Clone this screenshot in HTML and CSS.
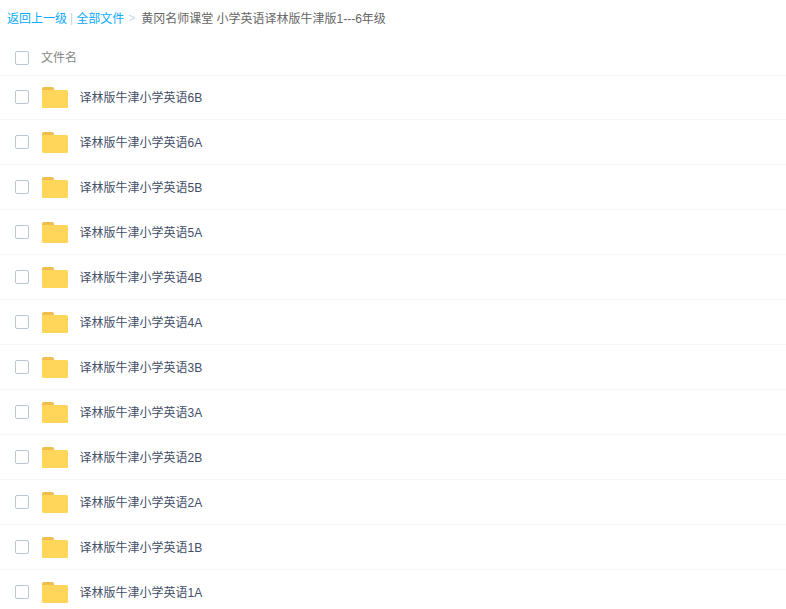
FILE: index.html
```html
<!DOCTYPE html>
<html lang="zh-CN">
<head>
<meta charset="utf-8">
<title>文件列表</title>
<link rel="stylesheet" href="styles.css">
</head>
<body>
<div class="crumbs"><a class="link">返回上一级</a><span class="bar">|</span><a class="link">全部文件</a><span class="sep">&gt;</span><span class="current">黄冈名师课堂 小学英语译林版牛津版1---6年级</span></div>
<div class="head"><span class="check"></span><span class="head-label">文件名</span></div>
<ul class="list">
<li class="row"><span class="check"></span><svg class="folder" viewBox="0 0 26 21"><path fill="#f0bd4e" d="M0 2a2 2 0 0 1 2-2h8a2 2 0 0 1 2 2v1H0z"/><path fill="#ffd659" d="M0 3h24.500A1.500 1.500 0 0 1 26 4.500V19.500A1.500 1.500 0 0 1 24.500 21H1.500A1.500 1.500 0 0 1 0 19.500z"/></svg><span class="name">译林版牛津小学英语6B</span></li>
<li class="row"><span class="check"></span><svg class="folder" viewBox="0 0 26 21"><path fill="#f0bd4e" d="M0 2a2 2 0 0 1 2-2h8a2 2 0 0 1 2 2v1H0z"/><path fill="#ffd659" d="M0 3h24.500A1.500 1.500 0 0 1 26 4.500V19.500A1.500 1.500 0 0 1 24.500 21H1.500A1.500 1.500 0 0 1 0 19.500z"/></svg><span class="name">译林版牛津小学英语6A</span></li>
<li class="row"><span class="check"></span><svg class="folder" viewBox="0 0 26 21"><path fill="#f0bd4e" d="M0 2a2 2 0 0 1 2-2h8a2 2 0 0 1 2 2v1H0z"/><path fill="#ffd659" d="M0 3h24.500A1.500 1.500 0 0 1 26 4.500V19.500A1.500 1.500 0 0 1 24.500 21H1.500A1.500 1.500 0 0 1 0 19.500z"/></svg><span class="name">译林版牛津小学英语5B</span></li>
<li class="row"><span class="check"></span><svg class="folder" viewBox="0 0 26 21"><path fill="#f0bd4e" d="M0 2a2 2 0 0 1 2-2h8a2 2 0 0 1 2 2v1H0z"/><path fill="#ffd659" d="M0 3h24.500A1.500 1.500 0 0 1 26 4.500V19.500A1.500 1.500 0 0 1 24.500 21H1.500A1.500 1.500 0 0 1 0 19.500z"/></svg><span class="name">译林版牛津小学英语5A</span></li>
<li class="row"><span class="check"></span><svg class="folder" viewBox="0 0 26 21"><path fill="#f0bd4e" d="M0 2a2 2 0 0 1 2-2h8a2 2 0 0 1 2 2v1H0z"/><path fill="#ffd659" d="M0 3h24.500A1.500 1.500 0 0 1 26 4.500V19.500A1.500 1.500 0 0 1 24.500 21H1.500A1.500 1.500 0 0 1 0 19.500z"/></svg><span class="name">译林版牛津小学英语4B</span></li>
<li class="row"><span class="check"></span><svg class="folder" viewBox="0 0 26 21"><path fill="#f0bd4e" d="M0 2a2 2 0 0 1 2-2h8a2 2 0 0 1 2 2v1H0z"/><path fill="#ffd659" d="M0 3h24.500A1.500 1.500 0 0 1 26 4.500V19.500A1.500 1.500 0 0 1 24.500 21H1.500A1.500 1.500 0 0 1 0 19.500z"/></svg><span class="name">译林版牛津小学英语4A</span></li>
<li class="row"><span class="check"></span><svg class="folder" viewBox="0 0 26 21"><path fill="#f0bd4e" d="M0 2a2 2 0 0 1 2-2h8a2 2 0 0 1 2 2v1H0z"/><path fill="#ffd659" d="M0 3h24.500A1.500 1.500 0 0 1 26 4.500V19.500A1.500 1.500 0 0 1 24.500 21H1.500A1.500 1.500 0 0 1 0 19.500z"/></svg><span class="name">译林版牛津小学英语3B</span></li>
<li class="row"><span class="check"></span><svg class="folder" viewBox="0 0 26 21"><path fill="#f0bd4e" d="M0 2a2 2 0 0 1 2-2h8a2 2 0 0 1 2 2v1H0z"/><path fill="#ffd659" d="M0 3h24.500A1.500 1.500 0 0 1 26 4.500V19.500A1.500 1.500 0 0 1 24.500 21H1.500A1.500 1.500 0 0 1 0 19.500z"/></svg><span class="name">译林版牛津小学英语3A</span></li>
<li class="row"><span class="check"></span><svg class="folder" viewBox="0 0 26 21"><path fill="#f0bd4e" d="M0 2a2 2 0 0 1 2-2h8a2 2 0 0 1 2 2v1H0z"/><path fill="#ffd659" d="M0 3h24.500A1.500 1.500 0 0 1 26 4.500V19.500A1.500 1.500 0 0 1 24.500 21H1.500A1.500 1.500 0 0 1 0 19.500z"/></svg><span class="name">译林版牛津小学英语2B</span></li>
<li class="row"><span class="check"></span><svg class="folder" viewBox="0 0 26 21"><path fill="#f0bd4e" d="M0 2a2 2 0 0 1 2-2h8a2 2 0 0 1 2 2v1H0z"/><path fill="#ffd659" d="M0 3h24.500A1.500 1.500 0 0 1 26 4.500V19.500A1.500 1.500 0 0 1 24.500 21H1.500A1.500 1.500 0 0 1 0 19.500z"/></svg><span class="name">译林版牛津小学英语2A</span></li>
<li class="row"><span class="check"></span><svg class="folder" viewBox="0 0 26 21"><path fill="#f0bd4e" d="M0 2a2 2 0 0 1 2-2h8a2 2 0 0 1 2 2v1H0z"/><path fill="#ffd659" d="M0 3h24.500A1.500 1.500 0 0 1 26 4.500V19.500A1.500 1.500 0 0 1 24.500 21H1.500A1.500 1.500 0 0 1 0 19.500z"/></svg><span class="name">译林版牛津小学英语1B</span></li>
<li class="row"><span class="check"></span><svg class="folder" viewBox="0 0 26 21"><path fill="#f0bd4e" d="M0 2a2 2 0 0 1 2-2h8a2 2 0 0 1 2 2v1H0z"/><path fill="#ffd659" d="M0 3h24.500A1.500 1.500 0 0 1 26 4.500V19.500A1.500 1.500 0 0 1 24.500 21H1.500A1.500 1.500 0 0 1 0 19.500z"/></svg><span class="name">译林版牛津小学英语1A</span></li>
</ul>
</body>
</html>
```
FILE: styles.css
```css
html, body {
  margin: 0;
  padding: 0;
  height: 609px;
  overflow: hidden;
  background: #fff;
  font-family: "Liberation Sans", "Noto Sans CJK SC", sans-serif;
  font-size: 12px;
}
.crumbs {
  display: flex;
  align-items: center;
  height: 37px;
  padding: 0 0 2px 7px;
  box-sizing: border-box;
  white-space: nowrap;
  color: #666;
}
.link { color: #09aaff; }
.bar { color: #c1d3e3; margin: 0 3px; }
.sep { color: #c5d8f3; margin: 0 6px 0 4px; }
.current { color: #666; }
.head {
  display: flex;
  align-items: center;
  height: 39px;
  padding: 4px 0 0 15px;
  border-bottom: 1px solid #f4f6f8;
  box-sizing: border-box;
}
.head-label { margin: 0 0 3px 12px; color: #888; }
.check {
  flex: none;
  width: 12px;
  height: 12px;
  border: 1px solid #b9c7d5;
  border-radius: 2px;
}
.list { list-style: none; margin: 0; padding: 0; }
.row {
  display: flex;
  align-items: center;
  height: 45px;
  padding-left: 15px;
  border-bottom: 1px solid #f4f6f8;
  box-sizing: border-box;
}
.row:first-child { height: 44px; padding-bottom: 1px; }
.folder { flex: none; width: 26px; height: 21px; margin: 1px 0 0 13px; }
.name { margin: 0 0 2px 11.500px; color: #424e67; }
```
